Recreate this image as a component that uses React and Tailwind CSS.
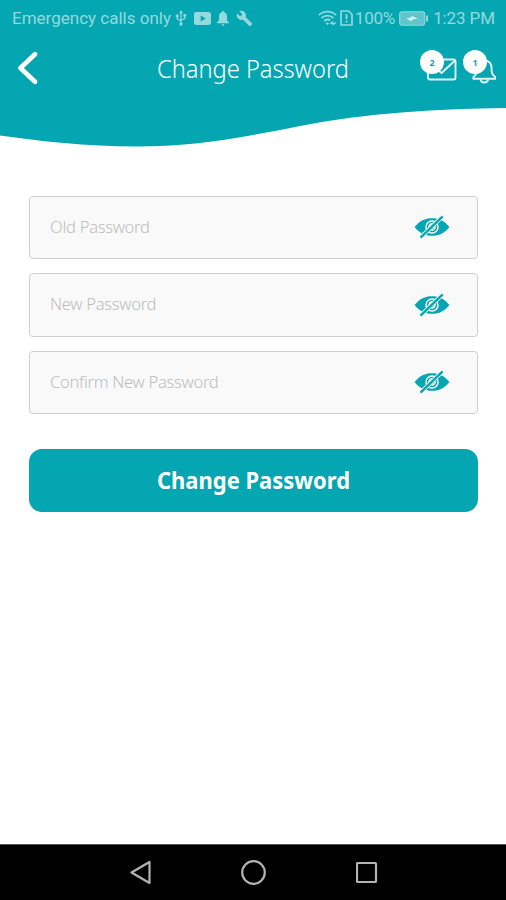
import React from "react";

function StatusBar() {
  return (
    <div className="flex h-9 items-center pl-3 pr-[11px] font-[Roboto,sans-serif] text-[17px] leading-none text-[#94d9de]">
      <span className="whitespace-nowrap">Emergency calls only</span>
      <svg className="ml-[4px] h-4 w-3" viewBox="0 0 12 16" fill="none" stroke="currentColor" strokeWidth="1.3">
        <path d="M6 14V2.5M2.2 6v2.8L6 11M9.8 5.5v3L6 10.2" />
        <path d="M6 0l2 3.2H4zM.8 4.6h2.8v2.6H.8zM8.4 4h2.8v2.6H8.4z" fill="currentColor" stroke="none" />
        <circle cx="6" cy="14" r="1.7" fill="currentColor" stroke="none" />
      </svg>
      <svg className="ml-[7px] h-[13px] w-[17px]" viewBox="0 0 17 13" fill="currentColor">
        <path fillRule="evenodd" d="M2.5 0h12A2.5 2.5 0 0 1 17 2.5v8a2.5 2.5 0 0 1-2.5 2.5h-12A2.5 2.5 0 0 1 0 10.5v-8A2.5 2.5 0 0 1 2.500 0zM6.700 3.500v6l5-3z" />
      </svg>
      <svg className="ml-[6px] h-[15px] w-3" viewBox="0 0 12 14" preserveAspectRatio="none" fill="currentColor">
        <path d="M6 0a1.100 1.100 0 0 1 1.100 1.100C9 1.600 10 3.200 10 5v3.700l2 2v.8H0v-.8l2-2V5c0-1.800 1-3.400 2.900-3.900A1.100 1.100 0 0 1 6 0zM4.600 12.300h2.800a1.400 1.400 0 0 1-2.800 0z" />
      </svg>
      <svg className="ml-[7px] h-[17px] w-[17px]" viewBox="0 0 24 24" fill="currentColor">
        <path d="M22.700 19l-9.100-9.100c.9-2.300.4-5-1.500-6.900-2-2-5-2.400-7.400-1.300L9 6 6 9 1.600 4.700C.4 7.100.9 10.100 2.900 12.100c1.900 1.900 4.600 2.400 6.900 1.500l9.100 9.100c.4.4 1 .4 1.400 0l2.300-2.300c.5-.4.5-1.100.1-1.400z" />
      </svg>
      <div className="grow" />
      <svg className="h-[16px] w-[20px]" viewBox="0 0 20 16" fill="none" stroke="currentColor" strokeWidth="1.900">
        <path d="M.8 5.200C5.500.4 13.500.4 18.200 5.200M3.500 8.100c3.300-3.300 8.700-3.300 12 0M6.200 11c1.900-1.700 4.200-1.900 6.100-.8" />
        <path d="M7.500 13.100c1-.9 2.700-.9 3.700 0l-1.850 2z" fill="currentColor" stroke="none" />
        <path d="M12.200 14l2.200-2 .8 2.400 2.800-1.900" strokeWidth="1.500" />
      </svg>
      <svg className="ml-[2px] h-[16px] w-[13px]" viewBox="0 0 13 16" fill="none" stroke="currentColor" strokeWidth="1.700">
        <path d="M1 1h7.500L12 4.500V15H1z" strokeLinejoin="round" />
        <path d="M6.500 4.300v4.800M6.500 10.600v1.900" strokeWidth="1.900" />
      </svg>
      <span className="ml-[2px] tracking-[-0.2px]">100%</span>
      <svg className="ml-[4px] h-[15px] w-[29px]" viewBox="0 0 29 15">
        <rect x=".7" y=".7" width="25" height="13.600" rx="2.500" fill="#60c5cb" stroke="#94d9de" strokeWidth="1.100" />
        <path d="M28 4.500v6" stroke="#94d9de" strokeWidth="2" />
        <path d="M7 7.400l5.300-.8V4.800l6.500 2.900-5.800.8v1.900z" fill="#d5f2f4" />
      </svg>
      <span className="ml-[5px] whitespace-nowrap tracking-[-0.1px]">1:23 PM</span>
    </div>
  );
}

function Badge({ children }) {
  return (
    <span className="absolute left-0 top-0 flex h-6 w-6 items-center justify-center rounded-full bg-white font-['Noto_Sans',sans-serif] text-[9px] font-bold leading-none text-[#2b9ba5]">
      {children}
    </span>
  );
}

function Header() {
  return (
    <header className="relative h-[160px] shrink-0">
      <svg className="absolute inset-0 h-full w-full" viewBox="0 0 506 160" preserveAspectRatio="none">
        <path d="M0 0H506V108C440 109 370 112 300 126C235 139 190 146.500 137 146.500C85 146.500 40 141 0 135.500Z" fill="#04a6b2" />
      </svg>
      <div className="relative">
        <StatusBar />
        <div className="grid h-16 grid-cols-[157px_192px_1fr] items-center">
          <button className="pl-[17px]" aria-label="Back">
            <svg className="h-9 w-[22px]" viewBox="0 0 22 36" fill="none" stroke="#fff" strokeWidth="4.700" strokeLinecap="round" strokeLinejoin="round">
              <path d="M18 4.200L3.400 18 18 31.800" />
            </svg>
          </button>
          <h1 className="origin-left scale-x-[0.945] whitespace-nowrap text-[25px] font-[350] leading-none text-white">
            Change Password
          </h1>
          <div className="flex h-9 justify-end gap-[6px] pr-[10px]">
            <button className="relative h-9 w-[37px]" aria-label="Messages">
              <svg className="h-9 w-[37px]" viewBox="0 0 37 36" fill="none" stroke="#e0f6f7" strokeWidth="1.900" strokeLinejoin="round">
                <rect x="8" y="9.500" width="27.500" height="20" rx="2" />
                <path d="M8.500 12L21.500 23 35 10.500" />
              </svg>
              <Badge>2</Badge>
            </button>
            <button className="relative h-9 w-[33px]" aria-label="Notifications">
              <svg className="h-9 w-[33px]" viewBox="0 0 33 36" fill="none" stroke="#e0f6f7" strokeWidth="1.900" strokeLinejoin="round">
                <path d="M21.300 10.500c-4.800 0-7.300 3.200-7.300 7.500v3c0 2.500-1.200 4-3.600 6v1.800h21.800V27c-2.400-2-3.600-3.500-3.600-6v-3c0-4.300-2.500-7.500-7.300-7.500z" />
                <path d="M17.500 29.300c.5 4.300 7.100 4.300 7.600 0" />
              </svg>
              <Badge>1</Badge>
            </button>
          </div>
        </div>
      </div>
    </header>
  );
}

function EyeOff() {
  return (
    <svg className="h-6 w-9" viewBox="0 0 36 24">
      <path d="M.6 12C5.500 5.800 11 3.200 18 3.200s12.500 2.600 17.400 8.800C30.500 18.200 25 20.800 18 20.800S5.500 18.200.6 12z" fill="#04a6b2" />
      <circle cx="18" cy="12" r="6" fill="none" stroke="#f9f9f9" strokeWidth="1.500" />
      <path d="M15 12.800a3.200 3.200 0 0 1 3.500-3.900M21 11.200a3.200 3.200 0 0 1-3.500 3.900" fill="none" stroke="#f9f9f9" strokeWidth="1.500" />
      <path d="M6.500 22.500L28.500 1.500" stroke="#f9f9f9" strokeWidth="4" />
      <path d="M6.500 22.700L28.700 1.300" stroke="#04a6b2" strokeWidth="2.400" />
    </svg>
  );
}

function Field({ label }) {
  return (
    <div className="flex h-[63.500px] items-center justify-between rounded-[4px] border-[1.500px] border-[#d0d0d0] bg-[#f9f9f9] pl-[20px] pr-[27.500px]">
      <span className="origin-left scale-x-[0.975] whitespace-nowrap pb-[2px] text-[17px] font-light leading-none tracking-[-0.3px] text-[#bdbdbd]">
        {label}
      </span>
      <EyeOff />
    </div>
  );
}

export default function App() {
  return (
    <div className="flex h-[900px] w-[506px] flex-col overflow-hidden bg-white font-['Noto_Sans','Open_Sans',sans-serif]">
      <Header />
      <main className="flex grow flex-col pl-[28.500px] pr-[28px] pt-[35.500px]">
        <div className="flex flex-col gap-[14px]">
          <Field label="Old Password" />
          <Field label="New Password" />
          <Field label="Confirm New Password" />
        </div>
        <button className="mt-[35px] flex h-[63px] w-full items-center justify-center rounded-[13px] bg-[#04a6b2] text-[24px] font-bold leading-none text-white">
          <span className="scale-x-[0.915] whitespace-nowrap pb-px">Change Password</span>
        </button>
      </main>
      <nav className="flex h-14 shrink-0 items-center justify-center gap-[88px] border-t border-[#555] bg-black pl-[2px]">
        <svg className="h-7 w-6" viewBox="0 0 24 28" fill="none" stroke="#b3b3b3" strokeWidth="2.200" strokeLinejoin="round">
          <path d="M21.500 3v21L3.500 13.500z" />
        </svg>
        <svg className="h-7 w-7" viewBox="0 0 28 28" fill="none" stroke="#b3b3b3" strokeWidth="2.200">
          <circle cx="13.500" cy="13.500" r="11.300" />
        </svg>
        <svg className="h-7 w-6" viewBox="0 0 24 28" fill="none" stroke="#b3b3b3" strokeWidth="2.200">
          <rect x="1" y="4" width="19" height="19" rx=".8" />
        </svg>
      </nav>
    </div>
  );
}
